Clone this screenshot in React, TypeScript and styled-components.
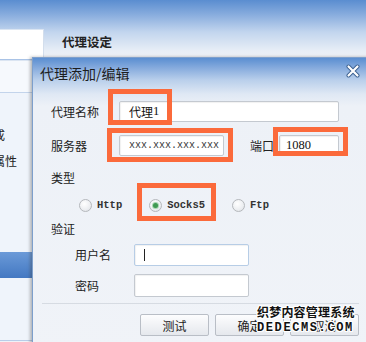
import styled, { createGlobalStyle } from 'styled-components'

const GlobalStyle = createGlobalStyle`
  html, body {
    margin: 0;
    padding: 0;
    background: #eef2f8;
  }
  * {
    box-sizing: border-box;
  }
`

const navItems = ['成', '属性', '', '', '']

const highlights = [
  { left: 108, top: 89, width: 64, height: 36 },
  { left: 107, top: 128, width: 126, height: 34 },
  { left: 273, top: 127, width: 75, height: 29 },
  { left: 137, top: 183, width: 79, height: 38 }
]

const App = () => {
  return (
    <Page>
      <GlobalStyle />
      <LeftNav>
        <NavTab $active>&nbsp;</NavTab>
        <NavTab>&nbsp;</NavTab>
        <NavList>
          {navItems.map((label, i) => (
            <NavItem key={i}>{label}</NavItem>
          ))}
          <NavItem $selected>&nbsp;</NavItem>
        </NavList>
      </LeftNav>
      <Main>
        <Heading>代理设定</Heading>
      </Main>

      <Dialog>
        <TitleBar>
          <Title>代理添加/编辑</Title>
          <CloseButton aria-label="close">
            <svg width="14" height="14" viewBox="0 0 14 14">
              <path d="M2.5 2.5 L11.5 11.5 M11.5 2.5 L2.5 11.5" stroke="#3a5f8f" strokeWidth="4" strokeLinecap="round" />
              <path d="M2.5 2.5 L11.5 11.5 M11.5 2.5 L2.5 11.5" stroke="#ffffff" strokeWidth="2.2" strokeLinecap="round" />
            </svg>
          </CloseButton>
        </TitleBar>
        <Body>
          <FormRow>
            <Label $width={68}>代理名称</Label>
            <TextInput $width={220}>
              代理<Serif>1</Serif>
            </TextInput>
          </FormRow>
          <FormRow $gap={13}>
            <Label $width={68}>服务器</Label>
            <TextInput $width={105} $mono>
              xxx.xxx.xxx.xxx
            </TextInput>
            <Label $width={29} $offset={26}>
              端口
            </Label>
            <TextInput $width={60} $pad={6}>
              <Serif>1080</Serif>
            </TextInput>
          </FormRow>
          <SectionLabel $gap={13}>类型</SectionLabel>
          <RadioRow>
            <RadioOption>
              <RadioCircle />
              <RadioText>Http</RadioText>
            </RadioOption>
            <RadioOption>
              <RadioCircle $checked />
              <RadioText>Socks5</RadioText>
            </RadioOption>
            <RadioOption>
              <RadioCircle />
              <RadioText>Ftp</RadioText>
            </RadioOption>
          </RadioRow>
          <SectionLabel $gap={6}>验证</SectionLabel>
          <SubRow $gap={6}>
            <Label $width={59}>用户名</Label>
            <TextInput $width={115} $height={22} $focused>
              <Caret />
            </TextInput>
          </SubRow>
          <SubRow $gap={8}>
            <Label $width={59}>密码</Label>
            <TextInput $width={115} $height={23} />
          </SubRow>
          <Separator />
          <ButtonRow>
            <Button>测试</Button>
            <Button>确定</Button>
            <Button>取消</Button>
          </ButtonRow>
        </Body>
      </Dialog>

      {highlights.map((h, i) => (
        <Highlight key={i} style={{ left: h.left, top: h.top, width: h.width, height: h.height }} />
      ))}

      <Watermark>
        <WatermarkCn>织梦内容管理系统</WatermarkCn>
        <WatermarkEn>DEDECMS.COM</WatermarkEn>
      </Watermark>
    </Page>
  )
}

export default App

const Page = styled.div`
  position: relative;
  width: 366px;
  height: 342px;
  overflow: hidden;
  display: flex;
  font-family: 'Noto Sans CJK SC', 'Noto Sans', sans-serif;
  font-size: 12px;
  color: #222;
  background: linear-gradient(
    to bottom,
    #5a8dd0 0px,
    #86abdd 14px,
    #c2d5ee 32px,
    #e6edf6 50px,
    #edf1f7 56px,
    #eef2f8 100%
  );
`

const LeftNav = styled.div`
  width: 44px;
  padding-top: 29px;
  display: flex;
  flex-direction: column;
`

const NavTab = styled.div<{ $active?: boolean }>`
  height: ${(p) => (p.$active ? 31 : 33)}px;
  background: ${(p) => (p.$active ? '#ffffff' : '#f6f9fd')};
  border-top: 1px solid #dbe5f2;
  border-right: 1px solid #d3deec;
  border-bottom: 1px solid ${(p) => (p.$active ? '#a9c3e6' : '#c3d4eb')};
`

const NavList = styled.div`
  flex: 1;
  display: flex;
  flex-direction: column;
  padding-top: 29px;
  background: #eff4fb;
  border-bottom: 1px solid #b9cde8;
  margin-bottom: 1px;
`

const NavItem = styled.div<{ $selected?: boolean }>`
  height: 26px;
  line-height: 26px;
  margin-left: ${(p) => (p.$selected ? 0 : -7)}px;
  white-space: nowrap;
  color: #222;
  background: ${(p) => (p.$selected ? 'linear-gradient(to bottom, #6b9ad8, #4378c2)' : 'transparent')};
`

const Main = styled.div`
  flex: 1;
  padding: 34px 18px 0;
`

const Heading = styled.div`
  font-weight: 700;
  font-size: 12.5px;
  line-height: 16px;
`

const Dialog = styled.div`
  position: absolute;
  left: 32px;
  top: 57px;
  width: 344px;
  height: 300px;
  border: 1px solid #7d9fcc;
  border-right: 0;
  box-shadow: -2px 0 3px rgba(60, 60, 60, 0.35);
  background: linear-gradient(
    to bottom,
    #5a8ed1 0px,
    #86abdd 10px,
    #b9cfeb 22px,
    #dfe8f4 36px,
    #edf1f7 48px,
    #f0f3f8 100%
  );
`

const TitleBar = styled.div`
  height: 31px;
  display: flex;
  align-items: center;
  justify-content: space-between;
  padding: 0 16px 0 7px;
`

const Title = styled.div`
  font-size: 14px;
  color: #1d1d1d;
  padding-bottom: 2px;
`

const CloseButton = styled.div`
  display: flex;
  margin-top: -6px;
`

const Body = styled.div`
  display: flex;
  flex-direction: column;
  padding: 12px 0 0 18px;
`

const FormRow = styled.div<{ $gap?: number }>`
  display: flex;
  align-items: center;
  margin-top: ${(p) => p.$gap ?? 0}px;
`

const SubRow = styled(FormRow)`
  padding-left: 24px;
`

const Label = styled.div<{ $width: number; $offset?: number }>`
  width: ${(p) => p.$width}px;
  margin-left: ${(p) => p.$offset ?? 0}px;
  white-space: nowrap;
  line-height: 16px;
`

const SectionLabel = styled.div<{ $gap: number }>`
  margin-top: ${(p) => p.$gap}px;
  height: 18px;
  line-height: 18px;
`

const TextInput = styled.div<{ $width: number; $height?: number; $mono?: boolean; $pad?: number; $focused?: boolean }>`
  width: ${(p) => p.$width}px;
  height: ${(p) => p.$height ?? 21}px;
  display: flex;
  align-items: center;
  padding-left: ${(p) => p.$pad ?? 9}px;
  background: #ffffff;
  border: 1px solid ${(p) => (p.$focused ? '#b7cde6' : '#c4c9d0')};
  border-radius: 2px;
  box-shadow: inset 1px 1px 1px rgba(0, 0, 0, 0.06);
  white-space: nowrap;
  font-family: ${(p) => (p.$mono ? "'Liberation Mono', monospace" : "'Noto Sans CJK SC', sans-serif")};
  font-size: ${(p) => (p.$mono ? '10px' : '12px')};
  color: ${(p) => (p.$mono ? '#3a3a3a' : '#111')};
`

const Serif = styled.span`
  font-family: 'Liberation Serif', serif;
  font-size: 12.5px;
`

const Caret = styled.span`
  display: block;
  width: 1px;
  height: 12px;
  background: #222;
`

const RadioRow = styled.div`
  display: flex;
  align-items: center;
  gap: 27px;
  height: 18px;
  margin-top: 9px;
  padding-left: 28px;
`

const RadioOption = styled.div`
  display: flex;
  align-items: center;
  gap: 5px;
`

const RadioCircle = styled.span<{ $checked?: boolean }>`
  position: relative;
  width: 13px;
  height: 13px;
  border-radius: 50%;
  border: 1px solid #b5b8bc;
  background: radial-gradient(circle at 40% 35%, #ffffff 0%, #eceef1 60%, #d9dde2 100%);

  &::after {
    content: '';
    display: ${(p) => (p.$checked ? 'block' : 'none')};
    position: absolute;
    left: 3px;
    top: 3px;
    width: 5px;
    height: 5px;
    border-radius: 50%;
    background: #3f9a52;
    box-shadow: 0 0 0 1px #a9d6b2;
  }
`

const RadioText = styled.span`
  font-family: 'Liberation Mono', monospace;
  font-weight: 700;
  font-size: 10.5px;
  color: #333;
`

const Separator = styled.div`
  margin: 6px 0 0 -9px;
  width: 317px;
  height: 1px;
  background: #d6dbe2;
`

const ButtonRow = styled.div`
  display: flex;
  gap: 6px;
  margin-top: 10px;
  padding-left: 89px;
`

const Button = styled.div`
  width: 69px;
  height: 22px;
  display: flex;
  align-items: center;
  justify-content: center;
  border: 1px solid #b9bec6;
  border-radius: 2px;
  background: linear-gradient(to bottom, #fdfdfe, #e5e8ed);
  color: #222;
`

const Highlight = styled.div`
  position: absolute;
  border: 5px solid #fb6a3b;
`

const Watermark = styled.div`
  position: absolute;
  left: 257px;
  top: 305px;
  display: flex;
  flex-direction: column;
  align-items: flex-start;
  line-height: 14px;
  color: #111;
  text-shadow:
    1px 0 0 #fff,
    -1px 0 0 #fff,
    0 1px 0 #fff,
    0 -1px 0 #fff,
    1px 1px 0 #fff,
    -1px -1px 0 #fff,
    1px -1px 0 #fff,
    -1px 1px 0 #fff;
`

const WatermarkCn = styled.span`
  font-weight: 700;
  font-size: 12px;
  letter-spacing: 0.2px;
`

const WatermarkEn = styled.span`
  font-family: 'Liberation Mono', monospace;
  font-weight: 700;
  font-size: 12px;
  letter-spacing: 1.6px;
  margin-top: 2px;
`
